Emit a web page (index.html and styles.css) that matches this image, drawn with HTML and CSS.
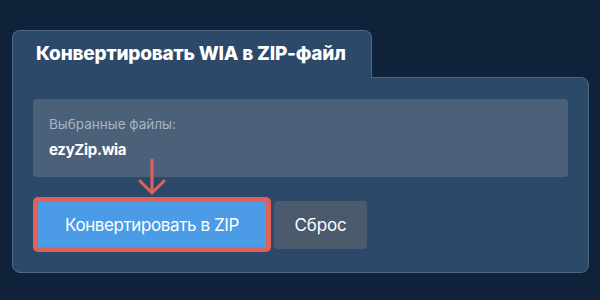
FILE: index.html
```html
<!DOCTYPE html>
<html lang="ru">
<head>
    <meta charset="UTF-8">
    <meta name="viewport" content="width=device-width, initial-scale=1.0">
    <title>Конвертировать WIA в ZIP</title>
    <link rel="stylesheet" href="styles.css">
</head>
<body>
    <div class="page">
        <div class="tab">
            <h1 class="tab-title">Конвертировать WIA в ZIP-файл</h1>
        </div>
        <div class="card">
            <div class="files">
                <p class="files-label">Выбранные файлы:</p>
                <p class="files-name">ezyZip.wia</p>
            </div>
            <div class="actions">
                <svg class="arrow" width="30" height="38" viewBox="0 0 30 38">
                    <path d="M15 2 V35 M3 23 L15 35 L27 23" fill="none" stroke="#e0605a" stroke-width="3" stroke-linecap="round" stroke-linejoin="round"/>
                </svg>
                <button class="convert-button">Конвертировать в ZIP</button>
                <button class="reset-button">Сброс</button>
            </div>
        </div>
    </div>
</body>
</html>
```

FILE: styles.css
```css
body {
    font-family: Inter, "Noto Sans", sans-serif;
    background-color: #10223a;
    margin: 0;
}
.page {
    padding: 30px 12px 0 12px;
}
.tab {
    position: relative;
    z-index: 1;
    display: inline-block;
    box-sizing: border-box;
    width: 360px;
    height: 48px;
    margin-bottom: -1px;
    background-color: #2d4969;
    border: 1px solid #4d6787;
    border-bottom: none;
    border-radius: 8px 8px 0 0;
}
.tab-title {
    margin: 0;
    padding: 12px 0 0 23px;
    color: #ffffff;
    font-size: 19px;
    font-weight: 800;
    letter-spacing: -0.2px;
    line-height: 22px;
}
.card {
    box-sizing: border-box;
    width: 577px;
    background-color: #2d4969;
    border: 1px solid #4d6787;
    border-radius: 0 8px 8px 8px;
    padding: 21px 20px 20px 20px;
}
.files {
    background-color: #4b6079;
    border-radius: 4px;
    height: 78px;
    box-sizing: border-box;
    padding: 17px 16px;
}
.files-label {
    margin: 0;
    color: #a9b5c4;
    font-size: 13.5px;
    line-height: 16px;
}
.files-name {
    margin: 8px 0 0 0;
    color: #ffffff;
    font-size: 15px;
    font-weight: 700;
    letter-spacing: -0.3px;
    line-height: 20px;
}
.actions {
    position: relative;
    display: flex;
    align-items: center;
    gap: 3px;
    margin-top: 20px;
}
.arrow {
    position: absolute;
    left: 104px;
    top: -39px;
}
.convert-button {
    box-sizing: border-box;
    height: 55px;
    width: 238px;
    padding: 0;
    background-color: #4c9be6;
    border: 5px solid #e0605a;
    border-radius: 5px;
    color: #ffffff;
    font-family: Inter, "Noto Sans", sans-serif;
    font-size: 17px;
    letter-spacing: -0.4px;
    cursor: pointer;
}
.reset-button {
    box-sizing: border-box;
    height: 48px;
    width: 93px;
    padding: 0;
    background-color: #4b5b6d;
    border: none;
    border-radius: 4px;
    color: #ffffff;
    font-family: Inter, "Noto Sans", sans-serif;
    font-size: 17px;
    letter-spacing: -0.2px;
    cursor: pointer;
}
```
